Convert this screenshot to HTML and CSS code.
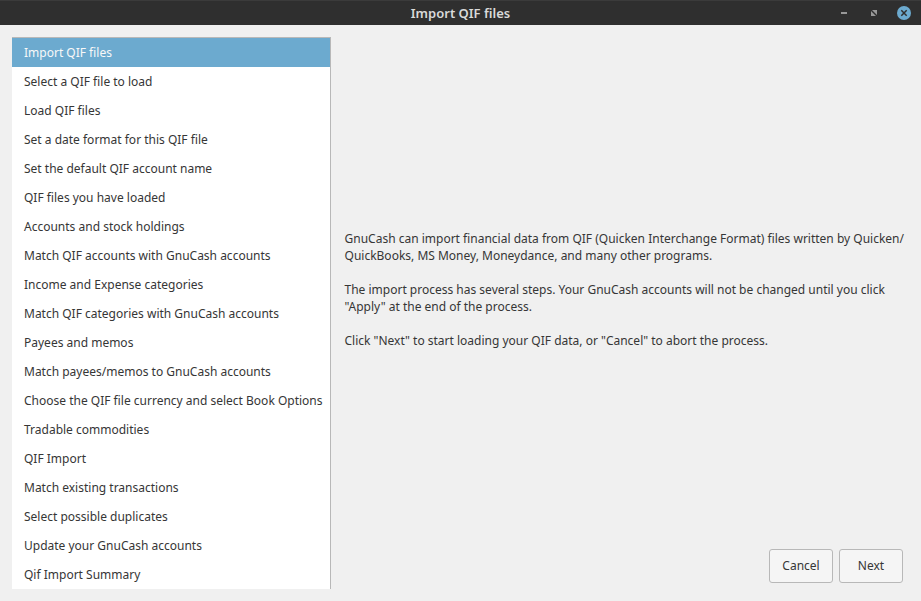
FILE: index.html
```html
<!DOCTYPE html>
<html lang="en">
<head>
<meta charset="utf-8">
<title>Import QIF files</title>
<link rel="stylesheet" href="styles.css">
</head>
<body>
<header class="titlebar">
  <h1 class="title">Import QIF files</h1>
  <div class="controls">
    <button class="control" type="button" aria-label="Minimize"><svg width="16" height="16" viewBox="0 0 16 16"><path d="M5 7h6v2H5z" fill="#989898"/></svg></button>
    <button class="control" type="button" aria-label="Maximize"><svg width="16" height="16" viewBox="0 0 16 16"><path d="M6 5h5v5zM5 6v5h5z" fill="#989898"/></svg></button>
    <button class="control" type="button" aria-label="Close"><svg width="16" height="16" viewBox="0 0 16 16"><circle cx="8" cy="8" r="7" fill="#6caacf"/><path d="M5.300 5.300l5.400 5.400m0-5.400l-5.400 5.400" stroke="#2f2f2f" stroke-width="1.500"/></svg></button>
  </div>
</header>
<main class="assistant">
  <ol class="steps">
    <li class="step current" aria-current="step">Import QIF files</li>
    <li class="step">Select a QIF file to load</li>
    <li class="step">Load QIF files</li>
    <li class="step">Set a date format for this QIF file</li>
    <li class="step">Set the default QIF account name</li>
    <li class="step">QIF files you have loaded</li>
    <li class="step">Accounts and stock holdings</li>
    <li class="step">Match QIF accounts with GnuCash accounts</li>
    <li class="step">Income and Expense categories</li>
    <li class="step">Match QIF categories with GnuCash accounts</li>
    <li class="step">Payees and memos</li>
    <li class="step">Match payees/memos to GnuCash accounts</li>
    <li class="step">Choose the QIF file currency and select Book Options</li>
    <li class="step">Tradable commodities</li>
    <li class="step">QIF Import</li>
    <li class="step">Match existing transactions</li>
    <li class="step">Select possible duplicates</li>
    <li class="step">Update your GnuCash accounts</li>
    <li class="step">Qif Import Summary</li>
  </ol>
  <section class="page">
    <div class="intro">
      <p>GnuCash can import financial data from QIF (Quicken Interchange Format) files written by Quicken/<wbr>QuickBooks, MS Money, Moneydance, and many other programs.</p>
      <p>The import process has several steps. Your GnuCash accounts will not be changed until you click "Apply" at the end of the process.</p>
      <p>Click "Next" to start loading your QIF data, or "Cancel" to abort the process.</p>
    </div>
    <div class="actions">
      <button class="button" type="button">Cancel</button>
      <button class="button" type="button">Next</button>
    </div>
  </section>
</main>
</body>
</html>
```

FILE: styles.css
```css
* { box-sizing: border-box; }

body {
  margin: 0;
  min-height: 100vh;
  display: flex;
  flex-direction: column;
  background: #f0f0f0;
  color: #363636;
  font: 12px/17px "Noto Sans", sans-serif;
}

.titlebar {
  display: grid;
  grid-template-columns: 1fr auto 1fr;
  align-items: center;
  height: 25px;
  padding: 0 9px;
  border-top: 1px solid #3b3b3b;
  background: #2f2f2f;
  color: #dadada;
}

.title {
  grid-column: 2;
  margin: 0;
  font-size: 13px;
  line-height: 24px;
  font-weight: 600;
}

.controls {
  display: flex;
  justify-content: flex-end;
  gap: 14px;
}

.control {
  display: flex;
  padding: 0;
  border: 0;
  background: none;
}

.assistant {
  flex: 1;
  display: flex;
  padding: 12px;
  gap: 14px;
}

.steps {
  flex: none;
  margin: 0;
  padding: 0;
  list-style: none;
  background: #fff;
  border: 1px solid #b8b8b8;
  border-width: 1px 1px 0 0;
}

.step {
  padding: 6px 7px 6px 12px;
}

.current {
  background: #6caacf;
  color: #f8f8f8;
}

.page {
  flex: 1;
  display: flex;
  flex-direction: column;
}

.intro {
  flex: 1;
  display: flex;
  flex-direction: column;
  justify-content: center;
  gap: 17px;
  padding-bottom: 2px;
}

.intro p { margin: 0; }

.actions {
  display: flex;
  justify-content: flex-end;
  gap: 6px;
  padding: 6px;
}

.button {
  width: 64px;
  height: 34px;
  padding: 0 0 2px;
  border: 1px solid #b8b8b8;
  border-radius: 3px;
  background: #f5f5f5;
  color: inherit;
  font: inherit;
}
```
